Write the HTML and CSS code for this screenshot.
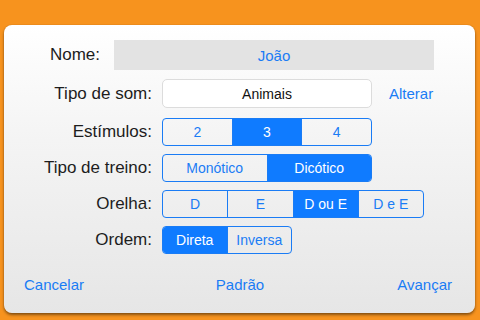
FILE: index.html
```html
<!DOCTYPE html>
<html lang="pt">
<head>
<meta charset="utf-8">
<link rel="stylesheet" href="styles.css">
</head>
<body>
<div class="panel">
  <div class="row row-name">
    <span class="label label-name">Nome:</span>
    <div class="name-field">João</div>
  </div>
  <div class="row row-sound">
    <span class="label">Tipo de som:</span>
    <div class="sound-box">Animais</div>
    <span class="link alter">Alterar</span>
  </div>
  <div class="row row-seg">
    <span class="label">Estímulos:</span>
    <div class="seg w210">
      <span>2</span><span class="on">3</span><span>4</span>
    </div>
  </div>
  <div class="row row-seg">
    <span class="label">Tipo de treino:</span>
    <div class="seg w210">
      <span>Monótico</span><span class="on">Dicótico</span>
    </div>
  </div>
  <div class="row row-seg">
    <span class="label">Orelha:</span>
    <div class="seg w262">
      <span>D</span><span>E</span><span class="on">D ou E</span><span>D e E</span>
    </div>
  </div>
  <div class="row row-seg">
    <span class="label">Ordem:</span>
    <div class="seg w130">
      <span class="on">Direta</span><span>Inversa</span>
    </div>
  </div>
  <div class="footer">
    <span class="link f-left">Cancelar</span>
    <span class="link f-mid">Padrão</span>
    <span class="link f-right">Avançar</span>
  </div>
</div>
</body>
</html>
```

FILE: styles.css
```css
html, body {
  margin: 0;
  padding: 0;
}
body {
  width: 480px;
  height: 320px;
  background: #f7931e;
  font-family: "Liberation Sans", Arial, sans-serif;
  overflow: hidden;
}
.panel {
  box-sizing: border-box;
  margin: 25px 0 0 4px;
  width: 471px;
  height: 288px;
  border-radius: 8px;
  background: linear-gradient(to bottom, #ffffff 0%, #f4f4f4 40%, #e6e6e6 100%);
  box-shadow: 0 2px 3px rgba(0, 0, 0, 0.45), 0 0 1px rgba(0, 0, 0, 0.3);
  padding-top: 15px;
  display: flex;
  flex-direction: column;
}
.row {
  display: flex;
  align-items: center;
}
.label {
  box-sizing: border-box;
  width: 148px;
  flex: none;
  text-align: right;
  font-size: 17px;
  color: #1d1d1d;
  margin-right: 10px;
}
.row-name {
  height: 30px;
}
.label-name {
  width: 96px;
  margin-right: 14px;
}
.name-field {
  width: 320px;
  height: 30px;
  background: #e3e3e3;
  color: #1a7cf5;
  font-size: 15px;
  display: flex;
  align-items: center;
  justify-content: center;
}
.row-sound {
  margin-top: 9px;
  height: 29px;
}
.sound-box {
  box-sizing: border-box;
  width: 210px;
  height: 29px;
  background: #ffffff;
  border: 1px solid #dcdcdc;
  border-radius: 5px;
  font-size: 14px;
  color: #111;
  display: flex;
  align-items: center;
  justify-content: center;
}
.link {
  color: #1a7cf5;
  font-size: 15px;
}
.alter {
  margin-left: 17px;
}
.row-seg {
  height: 28px;
  margin-top: 8px;
}
.row-sound + .row-seg {
  margin-top: 10px;
}
.seg {
  box-sizing: border-box;
  height: 28px;
  display: flex;
  border: 1px solid #1a7cf5;
  border-radius: 4px;
  overflow: hidden;
}
.seg span {
  flex: 1 1 0;
  display: flex;
  align-items: center;
  justify-content: center;
  font-size: 14px;
  color: #1a7cf5;
  border-left: 1px solid #1a7cf5;
}
.seg span:first-child {
  border-left: none;
}
.seg span.on {
  background: #0f7bff;
  color: #ffffff;
}
.w210 { width: 210px; }
.w262 { width: 262px; }
.w130 { width: 130px; }
.footer {
  margin-top: 22px;
  display: grid;
  grid-template-columns: 1fr auto 1fr;
  padding: 0 23px 0 20px;
  line-height: 18px;
}
.f-mid {
  padding-left: 4px;
}
.f-right {
  text-align: right;
}
```
